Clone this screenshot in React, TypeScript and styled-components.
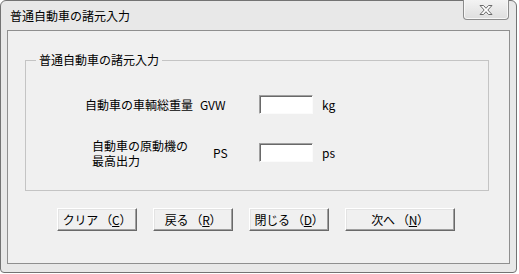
import { Fragment } from 'react';
import styled, { createGlobalStyle } from 'styled-components';

const GlobalStyle = createGlobalStyle`
  html, body {
    margin: 0;
    padding: 0;
    background: #ffffff;
  }
  body {
    font-family: "Noto Sans CJK JP", "Liberation Sans", sans-serif;
    font-size: 12px;
    color: #000;
  }
`;

const Window = styled.div`
  box-sizing: border-box;
  width: 517px;
  height: 273px;
  border: 1px solid #737373;
  border-radius: 6px 6px 4px 4px;
  padding: 0 6px 8px 6px;
  background: #e8e8e8;
  display: flex;
  flex-direction: column;
`;

const TitleBar = styled.div`
  height: 29px;
  flex: none;
  display: flex;
  justify-content: space-between;
  align-items: flex-start;
`;

const Title = styled.div`
  padding: 8px 0 0 3px;
  font-size: 12px;
  line-height: 14px;
`;

const CloseButton = styled.div`
  box-sizing: border-box;
  width: 46px;
  height: 20px;
  margin: -1px 1px 0 0;
  border: 1px solid #8c8c8c;
  border-top: none;
  border-radius: 0 0 4px 4px;
  background: linear-gradient(#f3f3f3, #dedede);
  box-shadow: inset 0 -1px 0 #f7f7f7, inset 1px 0 0 #f7f7f7, inset -1px 0 0 #f7f7f7;
  display: flex;
  align-items: center;
  justify-content: center;
`;

const Client = styled.div`
  flex: 1;
  border: 1px solid #8f8f8f;
  background: #f0f0f0;
  display: flex;
  flex-direction: column;
`;

const GroupBox = styled.div`
  position: relative;
  box-sizing: border-box;
  width: 464px;
  height: 131px;
  margin: 29px 0 0 17px;
  border: 1px solid #c4c4c4;
  padding-top: 29px;
  display: grid;
  grid-template-columns: 167px 66px 54px auto;
  grid-auto-rows: 29px;
  row-gap: 19px;
  align-items: center;
`;

const GroupCaption = styled.span`
  position: absolute;
  top: -8px;
  left: 10px;
  padding: 0 3px;
  background: #f0f0f0;
  line-height: 14px;
`;

const FieldLabel = styled.div<{ $pad: number }>`
  display: flex;
  justify-content: flex-end;
  padding-right: ${(p) => p.$pad}px;
  line-height: 15px;
  white-space: nowrap;
`;

const LabelText = styled.span`
  text-align: left;
`;

const Code = styled.div<{ $indent: number }>`
  padding-left: ${(p) => p.$indent}px;
  line-height: 14px;
`;

const TextInput = styled.input`
  box-sizing: border-box;
  width: 54px;
  height: 19px;
  margin: 0;
  padding: 0 2px;
  background: #fff;
  border: 1px solid;
  border-color: #a0a0a0 #fbfbfb #fbfbfb #a0a0a0;
  box-shadow: inset 1px 1px 0 #696969;
  outline: none;
  font: inherit;
`;

const Unit = styled.div`
  padding-left: 9px;
  line-height: 14px;
`;

const ButtonRow = styled.div`
  display: flex;
  gap: 16px;
  margin: 17px 0 0 49px;
`;

const Button = styled.button<{ $w: number }>`
  box-sizing: border-box;
  width: ${(p) => p.$w}px;
  height: 23px;
  margin: 0;
  padding: 0;
  background: #f0f0f0;
  border: 1px solid;
  border-color: #ffffff #696969 #696969 #ffffff;
  box-shadow: inset -1px -1px 0 #a0a0a0, inset 1px 1px 0 #e3e3e3;
  font: inherit;
  font-size: 12px;
  line-height: 14px;
  letter-spacing: -0.3px;
  color: #000;
  text-align: center;
`;

const fields = [
  { label: ['自動車の車輌総重量'], pad: 0, code: 'GVW', indent: 7, unit: 'kg' },
  { label: ['自動車の原動機の', '最高出力'], pad: 5, code: 'PS', indent: 20, unit: 'ps' },
];

const buttons = [
  { text: 'クリア', key: 'C', w: 80 },
  { text: '戻る', key: 'R', w: 80 },
  { text: '閉じる', key: 'D', w: 80 },
  { text: '次へ', key: 'N', w: 110 },
];

export default function App() {
  return (
    <>
      <GlobalStyle />
      <Window>
        <TitleBar>
          <Title>普通自動車の諸元入力</Title>
          <CloseButton>
            <svg width="16" height="12" viewBox="0 0 16 12">
              <path
                d="M2 1.5h3.5L8 4.3l2.5-2.8H14L9.8 6 14 10.5h-3.5L8 7.7l-2.5 2.8H2L6.2 6z"
                fill="#fff"
                stroke="#6a6a6a"
                strokeWidth="1"
                strokeLinejoin="round"
              />
            </svg>
          </CloseButton>
        </TitleBar>
        <Client>
          <GroupBox>
            <GroupCaption>普通自動車の諸元入力</GroupCaption>
            {fields.map((f) => (
              <Fragment key={f.code}>
                <FieldLabel $pad={f.pad}>
                  <LabelText>
                    {f.label.map((line, i) => (
                      <div key={i}>{line}</div>
                    ))}
                  </LabelText>
                </FieldLabel>
                <Code $indent={f.indent}>{f.code}</Code>
                <TextInput />
                <Unit>{f.unit}</Unit>
              </Fragment>
            ))}
          </GroupBox>
          <ButtonRow>
            {buttons.map((b) => (
              <Button key={b.key} $w={b.w}>
                {b.text} （<u>{b.key}</u>）
              </Button>
            ))}
          </ButtonRow>
        </Client>
      </Window>
    </>
  );
}
